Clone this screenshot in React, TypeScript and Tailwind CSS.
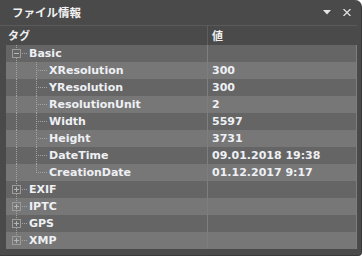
import React from "react";

type Row = {
  name: string;
  value?: string;
  level: 0 | 1;
  open?: boolean;
  last?: boolean;
  lastChild?: boolean;
};

const rows: Row[] = [
  { name: "Basic", level: 0, open: true },
  { name: "XResolution", value: "300", level: 1 },
  { name: "YResolution", value: "300", level: 1 },
  { name: "ResolutionUnit", value: "2", level: 1 },
  { name: "Width", value: "5597", level: 1 },
  { name: "Height", value: "3731", level: 1 },
  { name: "DateTime", value: "09.01.2018 19:38", level: 1 },
  { name: "CreationDate", value: "01.12.2017 9:17", level: 1, lastChild: true },
  { name: "EXIF", level: 0 },
  { name: "IPTC", level: 0 },
  { name: "GPS", level: 0 },
  { name: "XMP", level: 0, last: true },
];

const dot = "#a4a4a4";

function TreeLines({ row }: { row: Row }) {
  const w = row.level === 0 ? 23 : 43;
  return (
    <svg width={w} height={17} className="shrink-0" shapeRendering="crispEdges">
      {row.level === 0 ? (
        <>
          <line x1={10.5} y1={0} x2={10.5} y2={4} stroke={dot} strokeDasharray="1 1" />
          {!row.last && (
            <line x1={10.5} y1={13} x2={10.5} y2={17} stroke={dot} strokeDasharray="1 1" />
          )}
          <rect x={6.5} y={4.5} width={8} height={8} fill="none" stroke="#9c9c9c" />
          <line x1={8} y1={8.5} x2={13} y2={8.5} stroke="#b4b4b4" />
          {!row.open && <line x1={10.5} y1={6} x2={10.5} y2={11} stroke="#b4b4b4" />}
          <line x1={16} y1={8.5} x2={22} y2={8.5} stroke={dot} strokeDasharray="1 1" />
        </>
      ) : (
        <>
          <line x1={10.5} y1={0} x2={10.5} y2={17} stroke={dot} strokeDasharray="1 1" />
          <line
            x1={30.5}
            y1={0}
            x2={30.5}
            y2={row.lastChild ? 9 : 17}
            stroke={dot}
            strokeDasharray="1 1"
          />
          <line x1={32} y1={8.5} x2={41} y2={8.5} stroke={dot} strokeDasharray="1 1" />
        </>
      )}
    </svg>
  );
}

export default function App() {
  return (
    <div className="w-[362px] h-[256px] bg-white">
      <div className="w-[362px] h-[256px] bg-[#4a4a4a] rounded-tr-[7px] rounded-br-[4px] flex flex-col border-b border-r border-[#3a3a3a]">
        {/* Title */}
        <div className="h-[25px] flex items-center pl-[12px] pr-[10px] shrink-0">
          <span
            className="text-[11.5px] font-bold text-[#f2f2f2] leading-none"
            style={{ fontFamily: '"Noto Sans CJK JP", sans-serif' }}
          >
            ファイル情報
          </span>
          <div className="ml-auto flex items-center gap-[12px]">
            <svg width="8" height="5" viewBox="0 0 8 5">
              <path d="M0 0H8L4 4.5Z" fill="#e6e6e6" />
            </svg>
            <svg width="8" height="7" viewBox="0 0 8 7">
              <path d="M0.5 0L7.5 7M7.5 0L0.5 7" stroke="#e6e6e6" strokeWidth="1.2" />
            </svg>
          </div>
        </div>

        {/* Grid */}
        <div className="pl-[6px] pr-[4px] flex flex-col">
          <div
            className="h-[20px] flex border-t border-[#5a5a5a] text-[11px] font-bold text-[#f0f0f0] -ml-[6px] pl-[6px]"
            style={{ fontFamily: '"Noto Sans CJK JP", sans-serif' }}
          >
            <div className="w-[202px] flex items-center pl-[2px] border-r border-[#5e5e5e]">タグ</div>
            <div className="flex-1 flex items-center pl-[4px]">値</div>
          </div>
          {rows.map((r, i) => (
            <div
              key={r.name}
              className={`h-[17px] flex border-r border-[#7e7e7e] text-[11px] font-bold text-[#eef0f4] leading-none ${
                i % 2 === 0 ? "bg-[#656565]" : "bg-[#777777]"
              }`}
              style={{ fontFamily: '"DejaVu Sans", sans-serif' }}
            >
              <div className="w-[202px] flex items-center border-r border-[#7e7e7e]">
                <TreeLines row={r} />
                <span>{r.name}</span>
              </div>
              <div className="flex-1 flex items-center pl-[4px]">{r.value}</div>
            </div>
          ))}
        </div>
      </div>
    </div>
  );
}
